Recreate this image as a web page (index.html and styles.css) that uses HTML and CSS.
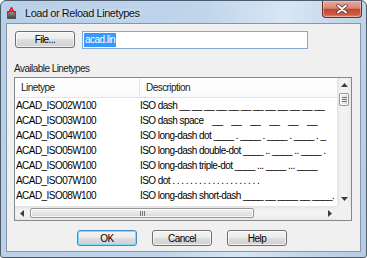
FILE: index.html
```html
<!DOCTYPE html>
<html lang="en">
<head>
    <meta charset="UTF-8">
    <title>Load or Reload Linetypes</title>
    <link rel="stylesheet" href="styles.css">
</head>
<body>
    <div class="window">
        <!-- Barra de titulo -->
        <div class="titlebar">
            <svg class="app-icon" width="9" height="12" viewBox="0 0 9 12">
                <defs>
                    <linearGradient id="doc" x1="0" y1="0" x2="0" y2="1">
                        <stop offset="0" stop-color="#9a9a9a"/>
                        <stop offset="1" stop-color="#3a3a3a"/>
                    </linearGradient>
                </defs>
                <rect x="0.5" y="4.5" width="8" height="7" fill="url(#doc)" stroke="#555"/>
                <path d="M1.5 6 L4.5 0.5 L7.5 6 M2.8 4 H6.2" stroke="#e0161b" stroke-width="1.4" fill="none"/>
            </svg>
            <span class="title">Load or Reload Linetypes</span>
            <div class="close-btn">
                <svg width="12" height="10" viewBox="0 0 12 10">
                    <path d="M2 1.5 L10 8.5 M10 1.5 L2 8.5" stroke="#5a2a25" stroke-width="3.4" stroke-linecap="round"/>
                    <path d="M2 1.5 L10 8.5 M10 1.5 L2 8.5" stroke="#fff" stroke-width="2" stroke-linecap="round"/>
                </svg>
            </div>
        </div>

        <div class="client">
            <div class="file-row">
                <button class="btn file-btn">File...</button>
                <div class="file-input"><span class="selected">acad.lin</span></div>
            </div>

            <div class="group-label">Available Linetypes</div>

            <!-- Lista de tipos de linha -->
            <div class="listview">
                <div class="list-content">
                    <div class="list-header">
                        <div class="col-name">Linetype</div>
                        <div class="col-desc">Description</div>
                    </div>
                    <div class="list-body" id="listBody"></div>
                </div>
                <div class="vscroll">
                    <div class="arrow">
                        <svg width="7" height="4" viewBox="0 0 7 4"><polygon points="0,4 3.5,0 7,4" fill="#3d3d3d"/></svg>
                    </div>
                    <div class="vthumb"><span></span><span></span><span></span></div>
                    <div class="track"></div>
                    <div class="arrow">
                        <svg width="7" height="4" viewBox="0 0 7 4"><polygon points="0,0 7,0 3.5,4" fill="#3d3d3d"/></svg>
                    </div>
                </div>
                <div class="hscroll">
                    <div class="arrow">
                        <svg width="4" height="7" viewBox="0 0 4 7"><polygon points="4,0 4,7 0,3.5" fill="#3d3d3d"/></svg>
                    </div>
                    <div class="hthumb"><span></span><span></span><span></span></div>
                    <div class="track"></div>
                    <div class="arrow">
                        <svg width="4" height="7" viewBox="0 0 4 7"><polygon points="0,0 4,3.5 0,7" fill="#3d3d3d"/></svg>
                    </div>
                </div>
                <div class="corner"></div>
            </div>

            <div class="button-row">
                <button class="btn default">OK</button>
                <button class="btn">Cancel</button>
                <button class="btn">Help</button>
            </div>
        </div>
    </div>

    <script>
        // Tipos de linha carregados do arquivo
        const linetypes = [
            { name: "ACAD_ISO02W100", desc: "ISO dash __ __ __ __ __ __ __ __ __ __ __ __" },
            { name: "ACAD_ISO03W100", desc: "ISO dash space    __    __    __    __    __    __" },
            { name: "ACAD_ISO04W100", desc: "ISO long-dash dot ____ . ____ . ____ . ____ . _" },
            { name: "ACAD_ISO05W100", desc: "ISO long-dash double-dot ____ .. ____ .. ____ ." },
            { name: "ACAD_ISO06W100", desc: "ISO long-dash triple-dot ____ ... ____ ... ____" },
            { name: "ACAD_ISO07W100", desc: "ISO dot . . . . . . . . . . . . . . . . . . . ." },
            { name: "ACAD_ISO08W100", desc: "ISO long-dash short-dash ____ __ ____ __ ____." }
        ];

        const listBody = document.getElementById("listBody");

        linetypes.forEach(lt => {
            const row = document.createElement("div");
            row.className = "list-row";
            row.innerHTML = `<div class="col-name">${lt.name}</div><div class="col-desc">${lt.desc}</div>`;
            listBody.appendChild(row);
        });
    </script>
</body>
</html>
```

FILE: styles.css
```css
/* Estilos globais */
* {
    box-sizing: border-box;
}

body {
    margin: 0;
    font-family: "Liberation Sans", Arial, sans-serif;
    font-size: 10px;
    letter-spacing: -0.55px;
    color: #000;
}

/* Janela */
.window {
    width: 367px;
    height: 258px;
    display: flex;
    flex-direction: column;
    border: 1px solid #4e5d6d;
    border-radius: 6px 6px 3px 3px;
    background: linear-gradient(100deg, #b8cfe8 0%, #c0d5ec 50%, #d8e6f4 70%, #c2d6eb 85%, #b6cce5 100%);
    overflow: hidden;
}

.titlebar {
    height: 22px;
    display: flex;
    align-items: center;
    padding-left: 6px;
}

.app-icon {
    margin-top: 1px;
}

.title {
    margin-left: 9px;
    margin-top: 2px;
    font-size: 11px;
    letter-spacing: -0.45px;
    color: #111;
    text-shadow: 0 0 4px rgba(255, 255, 255, 0.8);
}

.close-btn {
    margin-left: auto;
    margin-right: 4px;
    align-self: flex-start;
    width: 40px;
    height: 17px;
    display: flex;
    align-items: center;
    justify-content: center;
    border: 1px solid #6b2f28;
    border-top: none;
    border-radius: 0 0 4px 4px;
    background: linear-gradient(#e8a899 0%, #d98473 45%, #c54630 52%, #cc5c45 85%, #de8f6f 100%);
    box-shadow: inset 0 0 0 1px rgba(255, 210, 200, 0.5);
}

/* Area do dialogo */
.client {
    flex: 1;
    margin: 0 5px 5px;
    border: 1px solid #8396ab;
    background-color: #f0f0f0;
    display: flex;
    flex-direction: column;
}

.file-row {
    display: flex;
    gap: 7px;
    margin-top: 7px;
    padding-left: 8px;
}

.btn {
    width: 60px;
    height: 16px;
    padding: 0;
    font: inherit;
    letter-spacing: inherit;
    color: #000;
    border: 1px solid #707070;
    border-radius: 3px;
    background: linear-gradient(#f4f4f4 0%, #ebebeb 50%, #dddddd 50%, #d0d0d0 100%);
    box-shadow: inset 0 0 0 1px rgba(255, 255, 255, 0.7);
}

.file-btn {
    height: 17px;
}

.btn.default {
    border-color: #3c8ec6;
    box-shadow: inset 0 0 0 1px #7fdcf8;
}

.file-input {
    width: 226px;
    height: 18px;
    padding: 1px;
    display: flex;
    align-items: center;
    background-color: #fff;
    border: 1px solid #85a9cf;
}

.selected {
    background-color: #3399ff;
    color: #fff;
    padding: 0 1px;
    line-height: 14px;
}

.group-label {
    margin-top: 14px;
    padding-left: 7px;
    line-height: 12px;
    color: #1b1b1b;
}

/* Lista */
.listview {
    margin: 2px 0 0 7px;
    width: 338px;
    height: 144px;
    border: 1px solid #828790;
    background-color: #fff;
    display: grid;
    grid-template-columns: 1fr 14px;
    grid-template-rows: 1fr 14px;
}

.list-content {
    overflow: hidden;
    min-width: 0;
}

.list-header {
    height: 20px;
    display: flex;
    border-bottom: 1px solid #e2e4e8;
    background: linear-gradient(#fff, #f9fafb);
    line-height: 19px;
    color: #222;
}

.list-header .col-name {
    width: 125px;
    padding-left: 6px;
    border-right: 1px solid #e3e5e8;
}

.list-header .col-desc {
    padding-left: 6px;
}

.list-row {
    height: 15px;
    line-height: 15px;
    display: flex;
    white-space: pre;
}

.list-row .col-name {
    width: 125px;
    flex-shrink: 0;
    padding-left: 1px;
}

/* Barras de rolagem */
.vscroll {
    display: flex;
    flex-direction: column;
    background: linear-gradient(to right, #e4e4e4, #f2f2f2 30%, #f2f2f2 70%, #e8e8e8);
}

.hscroll {
    display: flex;
    background: linear-gradient(#e4e4e4, #f2f2f2 30%, #f2f2f2 70%, #e8e8e8);
}

.arrow {
    width: 14px;
    height: 14px;
    flex-shrink: 0;
    display: flex;
    align-items: center;
    justify-content: center;
}

.track {
    flex: 1;
}

.vthumb, .hthumb {
    display: flex;
    align-items: center;
    justify-content: center;
    gap: 1px;
    border: 1px solid #969696;
    border-radius: 2px;
    box-shadow: inset 0 0 0 1px rgba(255, 255, 255, 0.8);
}

.vthumb {
    flex-direction: column;
    margin: 1px 2px 0;
    height: 13px;
    background: linear-gradient(to right, #f2f2f2, #e6e6e6 50%, #d8d8d8);
}

.vthumb span {
    width: 5px;
    height: 1px;
    background-color: #777;
}

.hthumb {
    margin: 2px 0 0 1px;
    width: 224px;
    height: 10px;
    background: linear-gradient(#f2f2f2, #e6e6e6 50%, #d8d8d8);
}

.hthumb span {
    width: 1px;
    height: 5px;
    background-color: #777;
}

.corner {
    background-color: #f0f0f0;
}

/* Botoes */
.button-row {
    display: flex;
    gap: 15px;
    margin-top: 9px;
    padding-left: 70px;
}
```
